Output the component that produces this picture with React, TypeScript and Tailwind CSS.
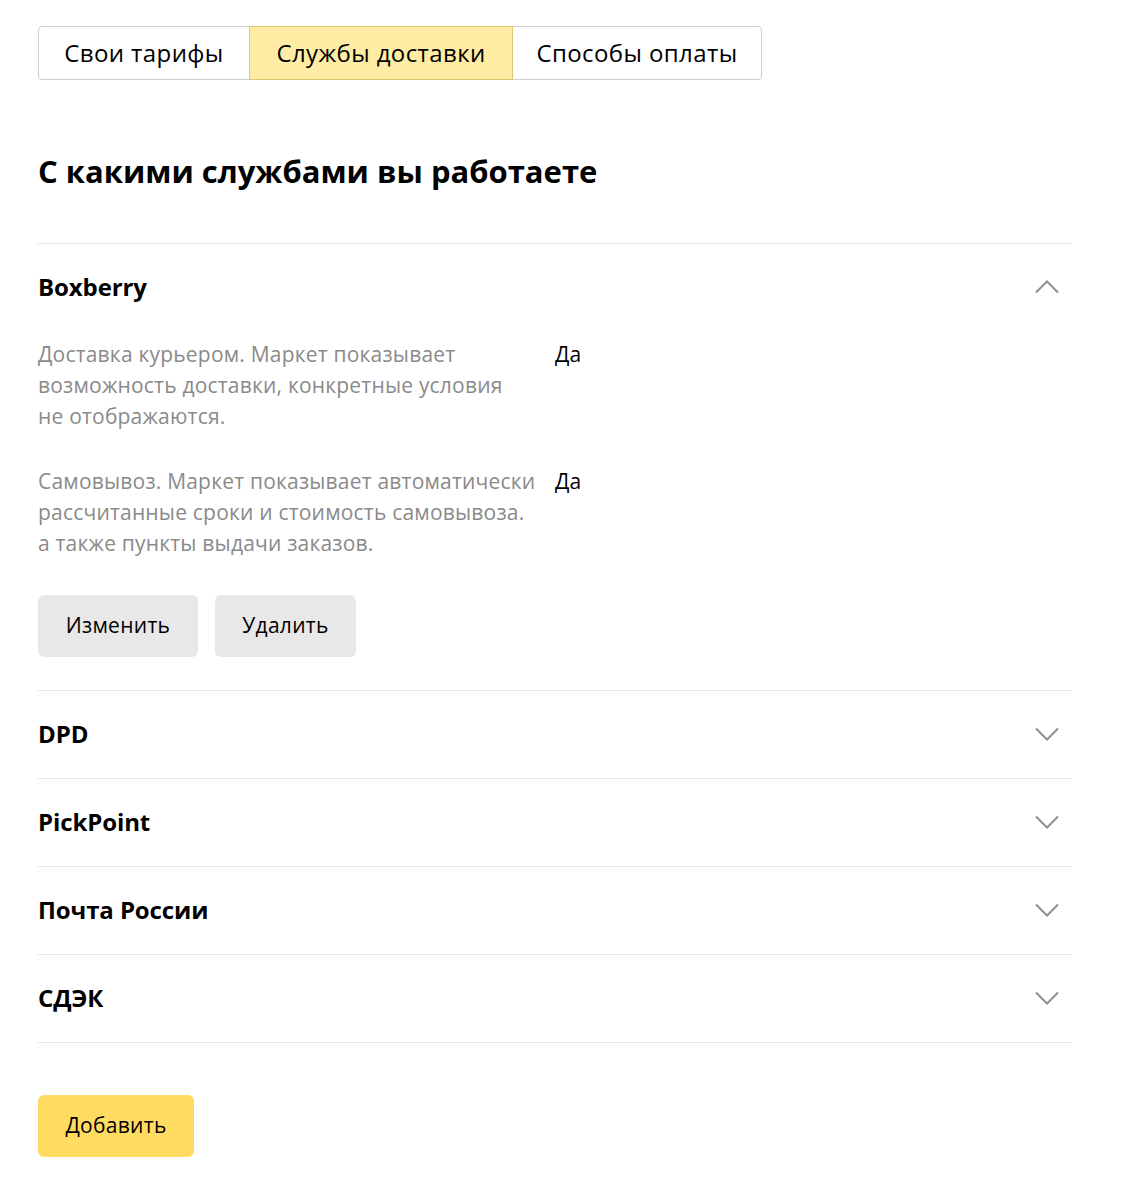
const font = { fontFamily: '"Open Sans", "Noto Sans", Arial, sans-serif' };

function Chevron({ up }: { up?: boolean }) {
    return (
        <svg width="24" height="14" viewBox="0 0 24 14" className="mr-[12px]" fill="none">
            <polyline
                points={up ? "1,12.5 12,1.5 23,12.5" : "1,1.5 12,12.5 23,1.5"}
                stroke="#8f8f8f"
                strokeWidth="2"
            />
        </svg>
    );
}

function Row({ name }: { name: string }) {
    return (
        <div className="flex h-[88px] items-center justify-between border-b border-[#e6e6e6] pb-[2px]">
            <span className="text-[24px] font-bold tracking-[-0.1px] text-black">{name}</span>
            <Chevron />
        </div>
    );
}

export default function App() {
    return (
        <div className="min-h-screen bg-white px-[38px] pt-[26px] text-black" style={font}>
            {/* Tabs */}
            <div className="flex h-[54px] w-[724px] rounded-[4px] border border-[#cfcfcf] text-[24px] tracking-[0.4px]">
                <div className="flex w-[210px] items-center justify-center">Свои тарифы</div>
                <div className="-my-px flex w-[264px] items-center justify-center border border-[#e2c66f] bg-[#feeca5]">
                    Службы доставки
                </div>
                <div className="flex flex-1 items-center justify-center">Способы оплаты</div>
            </div>

            <h1 className="mt-[71px] text-[31px] font-bold leading-[40px]">С какими службами вы работаете</h1>

            <div className="mt-[52px] w-[1033px] border-t border-[#e6e6e6]">
                {/* Boxberry expanded */}
                <div className="border-b border-[#e6e6e6] pb-[33px]">
                    <div className="flex h-[86px] items-center justify-between">
                        <span className="text-[24px] font-bold tracking-[-0.1px]">Boxberry</span>
                        <Chevron up />
                    </div>
                    <div className="mt-[9px] flex flex-col gap-[34px] text-[21px] leading-[31px] tracking-[0.2px]">
                        <div className="flex">
                            <p className="w-[517px] text-[#8a8a8a]">
                                Доставка курьером. Маркет показывает
                                <br />
                                возможность доставки, конкретные условия
                                <br />
                                не отображаются.
                            </p>
                            <span>Да</span>
                        </div>
                        <div className="flex">
                            <p className="w-[517px] text-[#8a8a8a]">
                                Самовывоз. Маркет показывает автоматически
                                <br />
                                рассчитанные сроки и стоимость самовывоза.
                                <br />
                                а также пункты выдачи заказов.
                            </p>
                            <span>Да</span>
                        </div>
                    </div>
                    <div className="mt-[36px] flex gap-[17px] text-[21px] tracking-[0.3px]">
                        <button className="h-[62px] w-[160px] rounded-[6px] bg-[#e8e8e8]">Изменить</button>
                        <button className="h-[62px] w-[141px] rounded-[6px] bg-[#e8e8e8]">Удалить</button>
                    </div>
                </div>
                <Row name="DPD" />
                <Row name="PickPoint" />
                <Row name="Почта России" />
                <Row name="СДЭК" />
            </div>

            <button className="mt-[52px] h-[62px] w-[156px] rounded-[6px] bg-[#ffdb62] text-[21px] tracking-[0.3px]">
                Добавить
            </button>
        </div>
    );
}
